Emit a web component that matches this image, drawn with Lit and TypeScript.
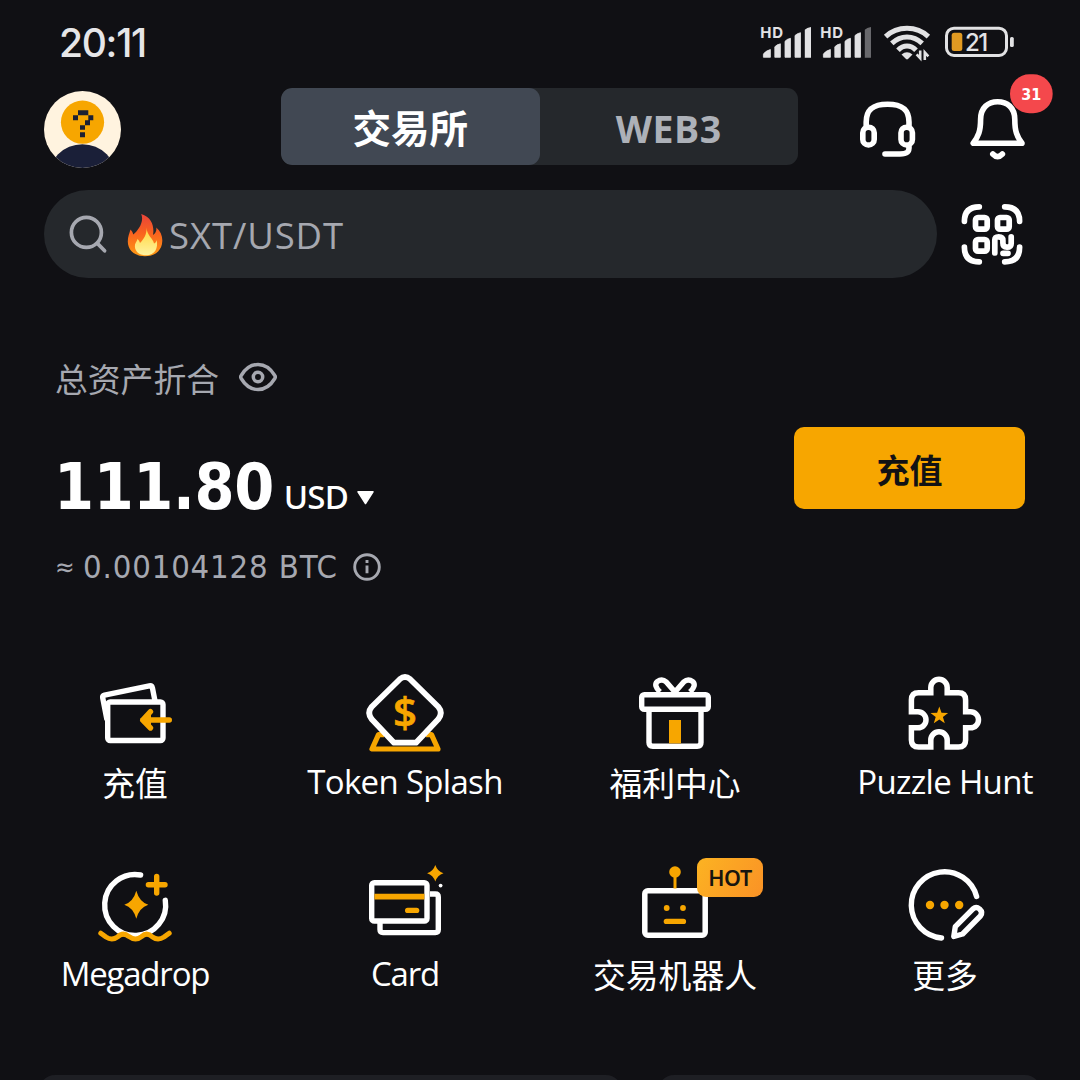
import { LitElement, html, svg, css, nothing } from "lit";
import { customElement, property } from "lit/decorators.js";

const O = "#f7a600";

const icons: Record<string, any> = {
  deposit: svg`<g fill="none" stroke="#fff" stroke-width="5.4" stroke-linecap="round" stroke-linejoin="round">
      <path stroke-linecap="butt" d="M107 720L102.7 697.8Q102.4 695.6 104.5 695.1L149.3 685.9Q151.8 685.4 152.4 687.8L155 701"/>
      <rect x="107.7" y="702" width="55.3" height="38.5" rx="2.5"/>
      <path stroke="${O}" d="M169.3 720H142.7M150.5 711.7L142.7 720L150.5 728"/></g>
      <path fill="${O}" d="M142 720L151 712V728Z"/>`,
  splash: svg`<g fill="none" stroke-linejoin="round">
      <path stroke="${O}" stroke-width="5.2" d="M384 734.6H378.5L372 749H438L431.5 734.6H426"/>
      <path stroke="#fff" stroke-width="5.8" fill="#101014" d="M399.8 679.2Q405 674.6 410.2 679.2L438.2 706.7Q443.4 713 438.2 719.3L416 742.7H394L371.8 719.3Q366.6 713 371.8 706.7Z"/></g>
      <text class="dollar" x="405" y="727" text-anchor="middle">$</text>`,
  gift: svg`<g fill="none" stroke="#fff" stroke-width="5.4" stroke-linejoin="round">
      <path d="M660 692Q653.3 685.5 657.2 681.6Q662 678.2 666.3 682L675 692L683.7 682Q688 678.2 692.8 681.6Q696.7 685.5 690 692"/>
      <rect x="641.7" y="694.7" width="66.6" height="14.6" rx="2.6"/>
      <path d="M649 710V742.5Q649 746.2 652.8 746.2H697.2Q701 746.2 701 742.5V710"/></g>
      <path fill="${O}" d="M669 720h12v23.4h-12z"/>`,
  puzzle: svg`<path fill="none" stroke="#fff" stroke-width="5.5" d="M911.4 711.8V700Q911.4 692.8 918.6 692.8H930.8V687.5A8.2 8.2 0 0 1 947.2 687.5V692.8H958.5Q965.6 692.8 965.6 700V711.8H970.5A8 8 0 0 1 970.5 727.8H965.6V740Q965.6 747 958.5 747H947.2V740A8.2 8.2 0 0 0 930.8 740V747H918.6Q911.4 747 911.4 740V727.8H918A8 8 0 0 0 918 711.8Z"/>
      <path fill="${O}" d="M939.3 706.6L941.5 712.8L948.1 713L942.9 717L944.8 723.3L939.3 719.5L933.8 723.3L935.7 717L930.5 713L937.1 712.8Z"/>`,
  mega: svg`<g fill="none" stroke-width="5.4" stroke-linecap="round" stroke-linejoin="round">
      <path stroke="#fff" d="M140.6 875A30.5 30.5 0 1 0 165.3 900.3"/>
      <g stroke="${O}"><path d="M156.7 876.4V893M148.4 884.7H165"/>
      <path stroke-width="5" d="M100.8 933.2L106 937Q111.8 941 117.5 937Q123 931.5 129 936.6Q135.7 941.5 141.5 936.6Q147 931.5 152.5 937Q158 941 164 937L169.2 933.2"/></g></g>
      <path fill="${O}" d="M136.3 890.7Q139.3 901.8 148.3 904.7Q139.3 907.6 136.3 918.7Q133.3 907.6 124.3 904.7Q133.3 901.8 136.3 890.7Z"/>`,
  card: svg`<g fill="none" stroke="#fff" stroke-width="5.4">
      <path d="M430 894H435.3Q438.3 894 438.3 897V929.6Q438.3 932.6 435.3 932.6H383Q380 932.6 380 929.6V923"/>
      <rect x="371.7" y="882.7" width="55.3" height="38.3" rx="2.6"/></g>
      <g fill="${O}"><path d="M374.4 893.7h50v5.8h-50z"/><rect x="405" y="907.7" width="14.3" height="5.4" rx="2.7"/>
      <path d="M435.3 865Q437.4 871.3 443.5 873.3Q437.4 875.3 435.3 881.6Q433.2 875.3 427.1 873.3Q433.2 871.3 435.3 865Z"/></g>
      <circle cx="440.6" cy="885.6" r="1.9" fill="#fff"/>`,
  robot: svg`<rect x="644.8" y="890.8" width="60.4" height="44.4" rx="3" fill="none" stroke="#fff" stroke-width="5.5"/>
      <g fill="${O}"><circle cx="675" cy="872" r="5.8"/><path d="M673.5 875h3v13.5h-3z"/>
      <circle cx="666.7" cy="908" r="2.9"/><circle cx="683" cy="908" r="2.9"/><rect x="663.7" y="918.7" width="22.4" height="5.4" rx="2.7"/></g>`,
  more: svg`<g fill="none" stroke="#fff" stroke-width="5.4" stroke-linecap="round" stroke-linejoin="round">
      <path d="M976.6 896.5A33.2 33.2 0 1 0 941.5 938"/>
      <path d="M953.8 936.5L955.3 926.6L973 908.8Q976.2 906.2 979.6 909Q983.2 912.4 980.4 916L962.6 934Z"/></g>
      <g fill="${O}"><circle cx="930" cy="905" r="4.2"/><circle cx="944.5" cy="905" r="4.2"/><circle cx="959.2" cy="905" r="4.2"/></g>`,
};

@customElement("status-bar")
class StatusBar extends LitElement {
  static styles = css`
    :host { display: flex; justify-content: space-between; height: 84px; padding: 0 60px 0 59px; }
    .time { font: 500 39px/86px Inter, sans-serif; color: #e6e6e8; letter-spacing: -1.3px; }
    svg { display: block; }
    .hd { font: 700 15px Inter, sans-serif; letter-spacing: 0.8px; }
    .pct { font: 500 24px Inter, sans-serif; letter-spacing: -1.5px; }
  `;
  private bars(weak: boolean) {
    return svg`<path d="M763.4 57.3v-3.2q2-3.2 7-4.6v7.8zM774.8 57.3V46.8q2-2.3 5.6-3v13.5zM785 57.3V41.3q2-2.3 5.5-3v19zM795 57.3V35.5q2-2 5.5-2.8v24.6z" stroke="#e2e2e4" stroke-width=".8" stroke-linejoin="round"/>
      <path d="M804.8 57.7V29.7q2-2 6.2-2.6v30.6z" fill="${weak ? "#68686c" : "#e2e2e4"}"/>
      <text class="hd" x="760.3" y="38">HD</text>`;
  }
  render() {
    return html`<div class="time">20:11</div>
      <svg width="260" height="84" viewBox="760 0 260 84" fill="#e2e2e4">
        ${this.bars(false)}<g transform="translate(60 0)">${this.bars(true)}</g>
        <g fill="none" stroke="#e2e2e4" stroke-width="5">
          <path d="M885.6 36.6Q894.5 28.3 907 28.3T928.4 36.6"/>
          <path d="M891.8 43.4Q898.5 37 907 37T922.2 43.4"/>
          <path d="M898 50.2Q902 46 907 46T916 50.2"/></g>
        <path d="M901.5 54.6Q907 49.8 912.5 54.6L908 59Q907 59.8 906 59Z"/>
        <path fill="none" stroke="#e2e2e4" stroke-width="2.6" d="M920.2 50.5V58.2L916.6 54.4M924.8 60V52.4L928.4 56.3"/>
        <rect x="946.5" y="28.2" width="60" height="27.3" rx="7.5" fill="none" stroke="#e2e2e4" stroke-width="3"/>
        <rect x="951.7" y="32.7" width="10.6" height="18.4" rx="2.5" fill="#e09a22"/>
        <rect x="1010" y="37" width="3.8" height="10" rx="1.6"/>
        <text class="pct" x="965" y="50.8">21</text>
      </svg>`;
  }
}

@customElement("app-header")
class AppHeader extends LitElement {
  static styles = css`
    :host { display: flex; height: 98px; box-sizing: border-box; padding-left: 44px; align-items: flex-start; }
    svg { display: block; flex: none; }
    .avatar { margin-top: 7px; }
    .tabs { display: flex; width: 517px; height: 77px; margin: 4px 0 0 160px; border-radius: 11px; background: #25282c; overflow: hidden; flex: none; }
    .tab { flex: 1; text-align: center; line-height: 77px; font-size: 38.5px; font-weight: 700; font-family: "Noto Sans CJK SC", sans-serif; color: #adb1b8; }
    .tab.on { background: #414853; color: #fff; border-radius: 11px; }
    .tab.web { font-family: "Open Sans", sans-serif; font-weight: 700; font-size: 37.5px; line-height: 82px; letter-spacing: 0.5px; }
    .actions { margin: -10px 0 0 50px; }
    .cnt { font: 700 16px "DejaVu Sans Condensed", "DejaVu Sans", sans-serif; font-stretch: condensed; }
  `;
  render() {
    return html`<svg class="avatar" width="77" height="77" viewBox="44 90.8 77 77">
        <clipPath id="c"><circle cx="82.5" cy="129.3" r="38.5"/></clipPath>
        <g clip-path="url(#c)"><path fill="#fff3df" d="M44 90h78v78H44z"/><circle cx="82.4" cy="178.4" r="34.4" fill="#1a1f38"/></g>
        <circle cx="82.5" cy="122" r="21.6" fill="${O}"/>
        <path fill="#1c2032" d="M78 110h10.3v5H93.3v5H90v5H85v4.5H80V125H85V120h3.3v-5H78v5H73v-5H78zM80 132h5v5H80z"/>
      </svg>
      <div class="tabs"><div class="tab on">交易所</div><div class="tab web">WEB3</div></div>
      <svg class="actions" width="220" height="98" viewBox="848 74 220 98" fill="none" stroke="#fff" stroke-width="5.6" stroke-linecap="round" stroke-linejoin="round">
        <path d="M866.2 127V122C866.2 109 873.5 104.2 887.6 104.2S909 109 909 122V127M909 146C909.5 152 907 154 900 154H885"/>
        <rect x="862.8" y="127.2" width="11.4" height="17.8" rx="5.6"/><rect x="901" y="127.2" width="11.4" height="17.8" rx="5.6"/>
        <path d="M973.2 143.2H1022C1016.8 136.5 1014.8 131 1014.8 119.5C1014.8 107.5 1007 101.8 997.6 101.8S980.6 107.5 980.6 119.5C980.6 131 978.4 136.5 973.2 143.2ZM992.8 154Q997.6 159.2 1002.4 154"/>
        <rect x="1010" y="74.2" width="42.7" height="39" rx="19.5" fill="#f4484c" stroke="none"/>
        <text class="cnt" x="1031.3" y="99.8" text-anchor="middle" fill="#fff" stroke="none">31</text>
      </svg>`;
  }
}

@customElement("search-row")
class SearchRow extends LitElement {
  static styles = css`
    :host { display: flex; padding: 8px 0 0 44px; gap: 24px; }
    svg { display: block; flex: none; }
    .box { display: flex; align-items: center; width: 893px; height: 88px; border-radius: 44px; background: #25282c; }
    .q { font: 400 36.5px/88px "Open Sans", sans-serif; color: #a6a8b0; letter-spacing: 0.9px; padding-top: 1px; margin-left: -1px; }
  `;
  render() {
    return html`<div class="box">
        <svg width="126" height="88" viewBox="44 190 126 88">
          <defs>
            <linearGradient id="f" x1="0" y1="0" x2="0" y2="1"><stop offset="0" stop-color="#e8433a"/><stop offset=".45" stop-color="#f9621f"/><stop offset="1" stop-color="#ff9a14"/></linearGradient>
            <linearGradient id="i" x1="0" y1="0" x2="0" y2="1"><stop offset="0" stop-color="#ffd43a"/><stop offset="1" stop-color="#fff3a0"/></linearGradient>
          </defs>
          <g fill="none" stroke="#a6a8b0" stroke-width="3.7" stroke-linecap="round"><circle cx="86.4" cy="232.4" r="15"/><path d="M97.4 243.4L104.6 250.8"/></g>
          <path fill="url(#f)" d="M141.2 214C152 217 154.5 227 153 235C156 233 156.8 230 156.2 227.5C160.5 231 162.5 236 162.3 241C162 251 154.5 256.2 145 256.2C134.5 256.2 127.8 250 127.8 241.5C127.8 236.5 129.5 233 130.5 229.5C132 231 132.8 232.5 133.2 234.5C138 231 144.5 222 141.2 214Z"/>
          <path fill="url(#i)" d="M146.5 227.5C147 236 153 238 154 243.5C155.5 243 156.3 241.5 156.6 240C158.5 248 155 255.3 146 255.3C138.5 255.3 134 250.5 135 244.5C136 242 137 241 137.5 239C139 240.5 139.5 241.5 140 243C144 239 147 234 146.5 227.5Z"/>
        </svg>
        <span class="q">SXT/USDT</span>
      </div>
      <svg width="64" height="88" viewBox="961 190 64 88" fill="none" stroke="#fff" stroke-width="5.7" stroke-linecap="round">
        <path d="M979.3 206.8Q964.4 206.8 964.4 221.3M1004.7 206.8Q1019.6 206.8 1019.6 221.3M979.3 261.8Q964.4 261.8 964.4 247.2M1004.7 261.8Q1019.6 261.8 1019.6 247.2"/>
        <rect x="975.5" y="217.5" width="11.7" height="11.7" rx="2.5"/><rect x="997.5" y="217.5" width="11.7" height="11.7" rx="2.5"/><rect x="975.5" y="239.5" width="11.7" height="11.7" rx="2.5"/>
        <path d="M994.8 253V240Q994.8 236.8 998.7 236.8Q1002.9 236.8 1002.9 240.5V243Q1002.9 247.2 1007 247.2Q1011.2 247.2 1011.2 243.5V236.8M1003 253.4H1008"/>
      </svg>`;
  }
}

@customElement("asset-panel")
class AssetPanel extends LitElement {
  static styles = css`
    :host { display: flex; justify-content: space-between; padding: 78px 55px 0 55px; height: 308px; }
    svg { display: block; }
    .label { display: flex; align-items: center; height: 44px; gap: 20px; color: #a6a8b0; font: 400 32.8px/42px "Noto Sans CJK SC", sans-serif; }
    .eye { margin-top: 1px; }
    .total { display: flex; align-items: baseline; height: 106px; }
    .num { font: 700 64px/106px "DejaVu Sans Condensed", "DejaVu Sans", sans-serif; font-stretch: condensed; color: #fff; letter-spacing: -0.4px; margin: 34px 0 0 -1px; }
    .usd { font: 500 33px/40px "Noto Sans", sans-serif; color: #fff; margin: 0 9px 0 10px; letter-spacing: -0.8px; }
    .caret { margin-bottom: -3px; }
    .btc { display: flex; align-items: center; height: 40px; margin-top: 41px; color: #a6a8b0; }
    .amt { font: 400 32.6px/40px "DejaVu Sans Condensed", "DejaVu Sans", sans-serif; font-stretch: condensed; letter-spacing: 0.85px; margin-right: 15px; }
    .approx { font: 400 26px/40px "DejaVu Sans Condensed", "DejaVu Sans", sans-serif; font-stretch: condensed; width: 28px; }
    .btn { width: 231px; height: 82px; margin-top: 71px; border: 0; border-radius: 10px; background: #f7a600; color: #121214; font: 700 33px/78px "Noto Sans CJK SC", sans-serif; padding: 2px 0 0; box-sizing: border-box; text-align: center; }
  `;
  render() {
    return html`<div>
        <div class="label">总资产折合
          <svg class="eye" width="38" height="36" viewBox="239 361 38 36" fill="none" stroke="#a6a8b0" stroke-width="3.5"><path d="M241.2 378.5Q240.2 377 241.2 375.5C250 360.8 266 360.8 274.8 375.5Q275.8 377 274.8 378.5C266 393.2 250 393.2 241.2 378.5Z"/><circle cx="258" cy="377" r="4.7"/></svg>
        </div>
        <div class="total"><span class="num">111.80</span><span class="usd">USD</span>
          <svg class="caret" width="18" height="18" viewBox="357 492 18 18"><path fill="#fff" stroke="#fff" stroke-width="1.5" stroke-linejoin="round" d="M358 492.8H373L365.5 504.5Z"/></svg></div>
        <div class="btc"><span class="approx">≈</span><span class="amt">0.00104128 BTC</span>
          <svg width="28" height="28" viewBox="353.3 553.7 28 28" fill="none" stroke="#a6a8b0" stroke-width="2.9"><circle cx="367.3" cy="567.7" r="12.3"/><path d="M367.3 566.2V574M367.3 560.6V563.6"/></svg></div>
      </div>
      <button class="btn">充值</button>`;
  }
}

@customElement("app-tile")
class AppTile extends LitElement {
  @property() icon = "";
  @property() label = "";
  @property() box = "";
  @property() tag = "";
  @property() kind = "";
  static styles = css`
    :host { display: flex; flex-direction: column; align-items: center; position: relative; height: 192px; }
    svg { display: block; }
    .dollar { font: 600 42px "Open Sans", sans-serif; fill: #f7a600; stroke: #f7a600; stroke-width: 0.6px; }
    .label { font: 400 33px/40px "Open Sans", sans-serif; color: #fff; white-space: nowrap; margin-top: 2px; letter-spacing: -0.68px; }
    .label.tight { letter-spacing: -1.2px; }
    .label.cjk { font-family: "Noto Sans CJK SC", sans-serif; font-size: 32.8px; margin-top: 2px; letter-spacing: 0; }
    .tag { position: absolute; left: 157px; top: -4px; width: 66px; height: 39px; border-radius: 9px; background: linear-gradient(120deg, #fcb322, #fa9226); color: #17150f; font: 600 21.5px/40px "Noto Sans", sans-serif; text-align: center; letter-spacing: -0.4px; }
  `;
  render() {
    return html`<svg width="96" height="90" viewBox="${this.box} 96 90">${icons[this.icon]}</svg>
      <div class="label ${this.kind}">${this.label}</div>
      ${this.tag ? html`<div class="tag">${this.tag}</div>` : nothing}`;
  }
}

@customElement("app-root")
class AppRoot extends LitElement {
  static styles = css`
    :host { display: block; width: 1080px; height: 1080px; overflow: hidden; background: #101014; }
    .grid { display: grid; grid-template-columns: repeat(4, 270px); align-content: start; margin-top: 6px; height: 405px; }
    .cards { display: flex; gap: 36px; padding-left: 39px; }
    .card { height: 60px; border-radius: 16px; background: #1e1f24; }
    .a { width: 583px; }
    .b { width: 383px; }
  `;
  private tiles = [
    ["deposit", "充值", "87 670", "cjk", ""],
    ["splash", "Token Splash", "357 670", "", ""],
    ["gift", "福利中心", "627 670", "cjk", ""],
    ["puzzle", "Puzzle Hunt", "897 670", "", ""],
    ["mega", "Megadrop", "87 862", "tight", ""],
    ["card", "Card", "357 862", "tight", ""],
    ["robot", "交易机器人", "627 862", "cjk", "HOT"],
    ["more", "更多", "897 862", "cjk", ""],
  ];
  render() {
    return html`<status-bar></status-bar><app-header></app-header><search-row></search-row><asset-panel></asset-panel>
      <div class="grid">${this.tiles.map(([i, l, b, k, t]) => html`<app-tile icon=${i} label=${l} box=${b} kind=${k} tag=${t}></app-tile>`)}</div>
      <div class="cards"><div class="card a"></div><div class="card b"></div></div>`;
  }
}
